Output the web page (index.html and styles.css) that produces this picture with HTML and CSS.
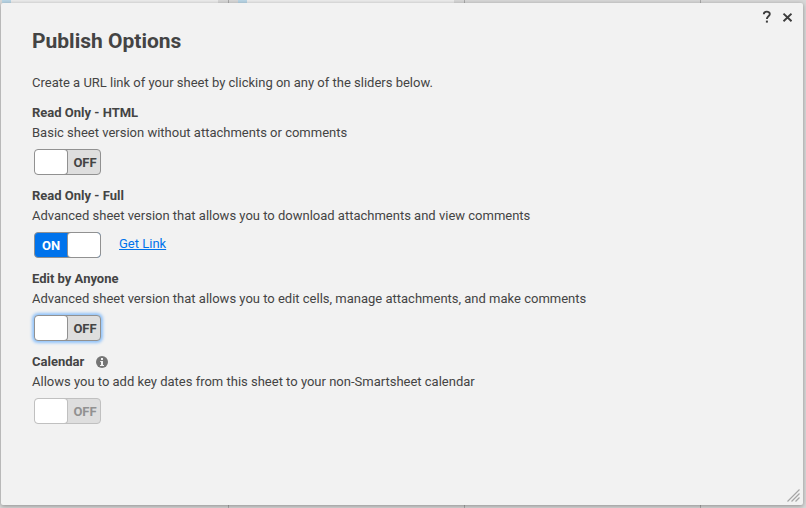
FILE: index.html
```html
<!DOCTYPE html>
<html lang="en">
<head>
<meta charset="utf-8">
<title>Publish Options</title>
<link rel="stylesheet" href="styles.css">
</head>
<body>
<main class="dialog">
  <div class="window-controls">
    <svg width="10" height="14" viewBox="0 0 10 14"><path d="M1.8 4.2C1.8 .8 7.8 .8 7.8 4C7.8 6.3 4.9 6.3 4.9 9" fill="none" stroke="#3d3d3d" stroke-width="1.9"/><rect x="3.9" y="10.6" width="2" height="2" fill="#3d3d3d"/></svg>
    <svg width="10" height="14" viewBox="0 0 10 14"><path d="M1.5 3.6L9.5 11.2M9.5 3.6L1.5 11.2" stroke="#3d3d3d" stroke-width="1.9"/></svg>
  </div>
  <h1>Publish Options</h1>
  <p class="intro">Create a URL link of your sheet by clicking on any of the sliders below.</p>
  <section class="option">
    <h2>Read Only - HTML</h2>
    <p>Basic sheet version without attachments or comments</p>
    <div class="control"><button class="switch"><span class="knob"></span><span class="label">OFF</span></button></div>
  </section>
  <section class="option">
    <h2>Read Only - Full</h2>
    <p>Advanced sheet version that allows you to download attachments and view comments</p>
    <div class="control"><button class="switch on"><span class="label">ON</span><span class="knob"></span></button><a href="#">Get Link</a></div>
  </section>
  <section class="option">
    <h2>Edit by Anyone</h2>
    <p>Advanced sheet version that allows you to edit cells, manage attachments, and make comments</p>
    <div class="control"><button class="switch focused"><span class="knob"></span><span class="label">OFF</span></button></div>
  </section>
  <section class="option">
    <h2>Calendar <svg class="info" width="12" height="12" viewBox="0 0 12 12"><circle cx="6" cy="6" r="6" fill="#757575"/><path d="M5 2h2v2H5zM4.2 5H7v4h1v1H4V9h1V6h-.8z" fill="#f2f2f2"/></svg></h2>
    <p>Allows you to add key dates from this sheet to your non-Smartsheet calendar</p>
    <div class="control"><button class="switch disabled"><span class="knob"></span><span class="label">OFF</span></button></div>
  </section>
  <svg class="grip" width="13" height="13" viewBox="0 0 13 13"><path d="M.5 12.5l12-12M4.5 12.5l8-8M8.5 12.5l4-4" stroke="#a6a6a6" stroke-width="1.2"/></svg>
</main>
</body>
</html>
```
FILE: styles.css
```css
* { box-sizing: border-box; }
body {
  margin: 0;
  height: 508px;
  padding: 3px 3px 3px 1px;
  overflow: hidden;
  font: 13px/20px Roboto, "Liberation Sans", sans-serif;
  color: #444;
  background:
    linear-gradient(#b9d6e6, #b9d6e6) 2px 0 / 9px 3px no-repeat,
    linear-gradient(#b9d6e6, #b9d6e6) 238px 0 / 9px 3px no-repeat,
    linear-gradient(#ececec, #ececec) 11px 0 / 207px 3px no-repeat,
    linear-gradient(#ececec, #ececec) 247px 0 / 207px 3px no-repeat,
    linear-gradient(#aaa, #aaa) 228px 0 / 1px 100% no-repeat,
    linear-gradient(#aaa, #aaa) 464px 0 / 1px 100% no-repeat,
    linear-gradient(#aaa, #aaa) 700px 0 / 1px 100% no-repeat,
    #d8d8d8;
}
.dialog {
  position: relative;
  height: 502px;
  padding: 25px 31px;
  background: #f2f2f2;
  border-radius: 2px;
  box-shadow: 0 1px 4px rgba(0, 0, 0, .35);
}
.window-controls {
  position: absolute;
  top: 7px;
  right: 11px;
  display: flex;
  gap: 10px;
}
.window-controls svg { display: block; }
h1 { margin: 0; font-size: 21px; line-height: 26px; font-weight: 700; }
p { margin: 0; }
.intro { margin: 19px 0 10px; }
.option { height: 83px; }
h2 { margin: 0; font-size: 13px; line-height: 20px; font-weight: 700; }
.info { margin-left: 9px; vertical-align: -2px; }
.control { display: flex; padding: 6px 0 0 2px; }
.switch {
  display: flex;
  width: 67px;
  height: 26px;
  padding: 0;
  overflow: hidden;
  font: 700 13px/24px Roboto, "Liberation Sans", sans-serif;
  color: #444;
  background: #dedede;
  border: 1px solid #919191;
  border-radius: 4px;
}
.knob {
  width: 32px;
  height: 24px;
  flex: none;
  background: #fff;
  border-radius: 3px;
  box-shadow: 0 0 0 1px #919191;
}
.label { flex: 1; padding: 1px 0 0 3px; line-height: 24px; text-align: center; }
.on { color: #fff; background: #0073ec; }
.on .label { padding: 1px 1px 0 0; }
.focused { box-shadow: 0 0 3px 2px #91c3fa; }
.disabled { color: #919191; border-color: #c0c0c0; }
.disabled .knob { box-shadow: 0 0 0 1px #c0c0c0; }
.control a { margin: 0 0 0 18px; color: #0073ec; line-height: 24px; }
.grip { position: absolute; right: 3px; bottom: 3px; }
```
